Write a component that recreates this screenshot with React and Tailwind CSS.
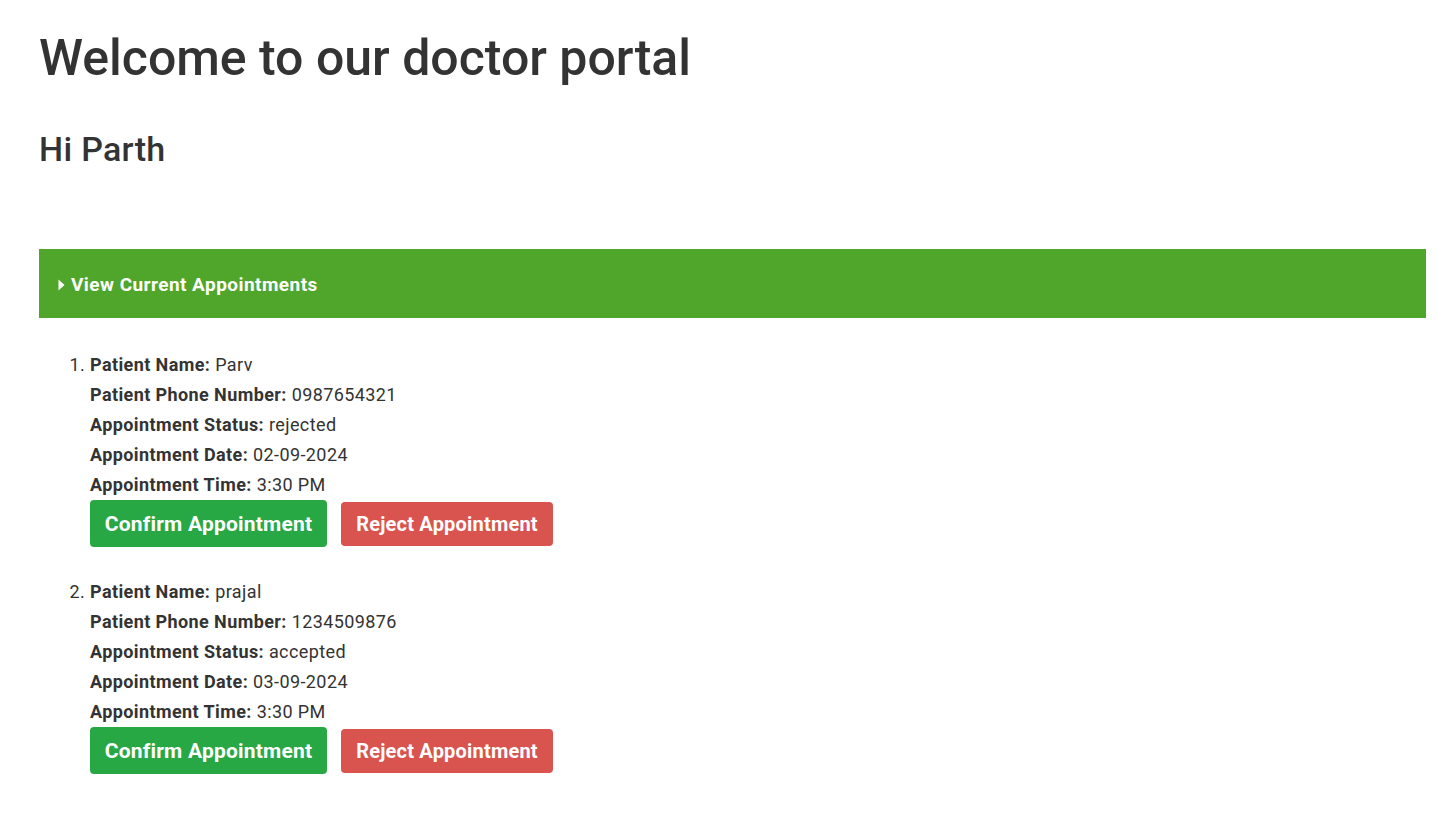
export default function App() {
  const items = [
    { name: "Parv", phone: "0987654321", status: "rejected", date: "02-09-2024", time: "3:30 PM" },
    { name: "prajal", phone: "1234509876", status: "accepted", date: "03-09-2024", time: "3:30 PM" },
  ];
  return (
    <div className="min-h-[840px] bg-white pl-[39px] pr-[11px] text-[#333]" style={{ fontFamily: "Roboto, 'Liberation Sans', sans-serif" }}>
      <h1 className="pt-[26px] text-[50px] font-medium leading-[64px] m-0">Welcome to our doctor portal</h1>
      <h2 className="mt-[37px] text-[34px] font-medium leading-[44px] tracking-[0.3px]">Hi Parth</h2>
      <div className="mt-[78px] h-[69px] bg-[#4fa62a] flex items-center pl-[19px] pt-[3px] text-white text-[19px] font-bold tracking-[0.45px]">
        <svg width="7" height="12" viewBox="0 0 7 12" className="mr-[6px]"><path d="M0.5 0.5 L6.5 6 L0.5 11.5 Z" fill="white" /></svg>
        View Current Appointments
      </div>
      <ol className="list-decimal pl-[51px] mt-[32px] text-[18px] leading-[30px] tracking-[0.4px]">
        {items.map((it, i) => (
          <li key={i} className="mb-[30px]">
            <div><b className="font-bold">Patient Name:</b> {it.name}</div>
            <div><b className="font-bold">Patient Phone Number:</b> {it.phone}</div>
            <div><b className="font-bold">Appointment Status:</b> {it.status}</div>
            <div><b className="font-bold">Appointment Date:</b> {it.date}</div>
            <div><b className="font-bold">Appointment Time:</b> {it.time}</div>
            <div className="flex items-center gap-[14px]">
              <button className="h-[47px] w-[237px] rounded-[4px] bg-[#28a745] text-white text-[21px] font-bold tracking-[0.2px]">Confirm Appointment</button>
              <button className="h-[44px] w-[212px] rounded-[4px] bg-[#d9534f] text-white text-[20px] font-bold tracking-[0.2px]">Reject Appointment</button>
            </div>
          </li>
        ))}
      </ol>
    </div>
  );
}
